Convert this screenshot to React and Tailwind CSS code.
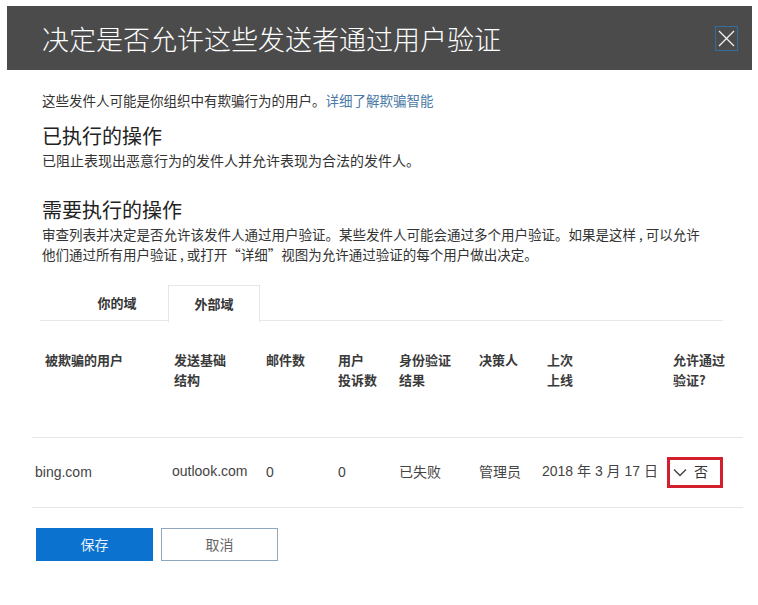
import React, { useState } from 'react';

const cjk = "font-['Noto_Sans_CJK_SC',sans-serif]";
const data = "font-['Liberation_Sans','Noto_Sans_CJK_SC',sans-serif]";

const cols = 'grid grid-cols-[138px_94px_72px_61px_80px_63px_125px_78px]';

const ChevronDown = () => (
    <svg width="14" height="9" viewBox="0 0 14 9" fill="none">
        <path d="M1 1.5 L7 7.5 L13 1.5" stroke="#444" strokeWidth="1.4" />
    </svg>
);

const App = () => {
    const [tab, setTab] = useState('external');
    const [allow, setAllow] = useState('否');

    return (
        <div className={`min-h-screen bg-white ${cjk}`}>
            {/* title bar */}
            <div className="ml-[7px] mr-[6px] mt-[6px] h-[64px] bg-[#4b4b4b] flex items-center justify-between pl-[35px] pr-[14px]">
                <h1 className="text-[27px] font-light text-white leading-none">决定是否允许这些发送者通过用户验证</h1>
                <button className="w-[23px] h-[25px] border border-[#2f6e9f] flex items-center justify-center">
                    <svg width="17" height="17" viewBox="0 0 17 17">
                        <path d="M1 1 L16 16 M16 1 L1 16" stroke="#f2f2f2" strokeWidth="1.3" />
                    </svg>
                </button>
            </div>

            <div className="px-[42px] text-[#333]">
                <p className="mt-[20px] text-[13.5px] leading-[20px]">
                    这些发件人可能是你组织中有欺骗行为的用户。<a className="text-[#4a7aa6]" href="#">详细了解欺骗智能</a>
                </p>
                <h2 className="mt-[13px] text-[20px] leading-[26px] text-[#222]">已执行的操作</h2>
                <p className="mt-[1px] text-[14px] leading-[20px]">已阻止表现出恶意行为的发件人并允许表现为合法的发件人。</p>
                <h2 className="mt-[27px] text-[20px] leading-[26px] text-[#222]">需要执行的操作</h2>
                <p className="mt-[1px] text-[13.5px] leading-[20px]">
                    审查列表并决定是否允许该发件人通过用户验证。某些发件人可能会通过多个用户验证。如果是这样 , 可以允许
                    <br />
                    他们通过所有用户验证 , 或打开“详细”视图为允许通过验证的每个用户做出决定。
                </p>
            </div>

            {/* tabs */}
            <div className="mt-[21px] ml-[40px] mr-[35px] h-[36px] border-b border-[#e8e8e8] flex gap-[5px] pl-[31px]">
                <button
                    onClick={() => setTab('yours')}
                    className={`w-[92px] h-[36px] text-[13px] font-bold text-[#333] ${tab === 'yours' ? 'bg-white border border-b-0 border-[#e6e6e6] -mb-px h-[37px]' : ''}`}
                >
                    你的域
                </button>
                <button
                    onClick={() => setTab('external')}
                    className={`w-[92px] h-[36px] text-[13px] font-bold text-[#333] ${tab === 'external' ? 'bg-white border border-b-0 border-[#e6e6e6] -mb-px h-[37px]' : ''}`}
                >
                    外部域
                </button>
            </div>

            {/* table */}
            <div className="mt-[29px] ml-[32px] w-[711px]">
                <div className={`${cols} h-[88px] border-b border-[#e6e6e6] text-[13px] leading-[20px] font-bold text-[#3a3a3a]`}>
                    <div className="pl-[13px]">被欺骗的用户</div>
                    <div className="pl-[4px]">发送基础<br />结构</div>
                    <div className="pl-[2px]">邮件数</div>
                    <div className="pl-[2px]">用户<br />投诉数</div>
                    <div className="pl-[2px]">身份验证<br />结果</div>
                    <div className="pl-[2px]">决策人</div>
                    <div className="pl-[7px]">上次<br />上线</div>
                    <div className="pl-[8px]">允许通过<br />验证?</div>
                </div>
                <div className={`${cols} h-[70px] items-center border-b border-[#e6e6e6] text-[14px] text-[#444] ${data}`}>
                    <div className="pl-[3px]">bing.com</div>
                    <div className="pl-[2px] -mt-[3px]">outlook.com</div>
                    <div className="pl-[2px]">0</div>
                    <div className="pl-[2px]">0</div>
                    <div className="pl-[2px]">已失败</div>
                    <div className="pl-[2px]">管理员</div>
                    <div className="pl-[2px] -mt-[3px]">2018 年 3 月 17 日</div>
                    <div className="pl-[2px]">
                        <button
                            onClick={() => setAllow(allow === '否' ? '是' : '否')}
                            className="w-[56px] h-[31px] border-[3px] border-[#d21f2e] flex items-center gap-[7px] pl-[3px] text-[14px] text-[#333]"
                        >
                            <ChevronDown />
                            {allow}
                        </button>
                    </div>
                </div>
            </div>

            {/* actions */}
            <div className="mt-[20px] ml-[36px] flex gap-[8px]">
                <button className="w-[117px] h-[33px] bg-[#0b72d0] text-[14px] text-[#e6f0fb]">保存</button>
                <button className="w-[117px] h-[33px] border border-[#8fa8bd] bg-white text-[14px] text-[#666]">取消</button>
            </div>
        </div>
    );
};

export default App;
